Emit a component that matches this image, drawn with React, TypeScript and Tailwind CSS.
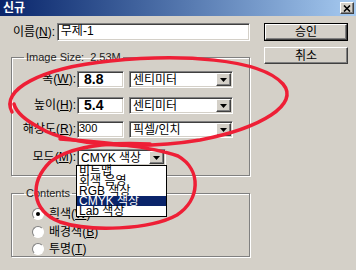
const font = "font-['Liberation_Sans','Noto_Sans_CJK_KR',sans-serif]";

// 움푹 들어간 입력칸 테두리 (윈도우 2000 스타일)
const sunken =
  "bg-white border border-t-[#808080] border-l-[#808080] border-b-white border-r-white shadow-[inset_1px_1px_0_#404040,inset_-1px_-1px_0_#d4d0c8]";
const raised =
  "bg-[#d4d0c8] border border-t-white border-l-white border-b-[#404040] border-r-[#404040] shadow-[inset_-1px_-1px_0_#808080]";

function Mn({ pre, k, post = "):" }: { pre: string; k: string; post?: string }) {
  return (
    <span>
      {pre}(<span className="underline">{k}</span>{post}
    </span>
  );
}

function Arrow() {
  return (
    <div className={`w-[15px] h-full flex items-center justify-center ${raised}`}>
      <svg width="7" height="4" viewBox="0 0 7 4">
        <path d="M0 0h7L3.5 4z" fill="#000" />
      </svg>
    </div>
  );
}

function Select({ value, w }: { value: string; w: string }) {
  return (
    <div className={`${w} h-[17px] flex ${sunken} p-[1px]`}>
      <div className="flex-1 pl-[2px] leading-[14px] text-[12px]">{value}</div>
      <Arrow />
    </div>
  );
}

function Row({ label, children, mt }: { label: React.ReactNode; children: React.ReactNode; mt: string }) {
  return (
    <div className={`flex items-center ${mt}`}>
      <div className="w-[64px] text-right text-[12px] leading-[17px]">{label}</div>
      <div className="ml-[1px] flex items-center gap-[5px]">{children}</div>
    </div>
  );
}

function Radio({ label, on, mt }: { label: React.ReactNode; on?: boolean; mt: string }) {
  return (
    <div className={`flex items-center gap-[5px] ${mt}`}>
      <div className="w-[12px] h-[12px] rounded-full bg-white border border-t-[#808080] border-l-[#808080] border-b-white border-r-white flex items-center justify-center">
        {on && <div className="w-[4px] h-[4px] rounded-full bg-black" />}
      </div>
      <span className="text-[12px] leading-[14px]">{label}</span>
    </div>
  );
}

export default function App() {
  const modes = ["비트맵", "회색 음영", "RGB 색상", "CMYK 색상", "Lab 색상"];
  return (
    <div className={`w-[356px] h-[270px] relative overflow-hidden bg-[#d4d0c8] text-black ${font}`}>
      {/* 제목 표시줄 */}
      <div className="h-[16px] flex items-center justify-between bg-gradient-to-r from-[#0a246a] to-[#a6caf0] pl-[3px] pr-[2px]">
        <span className="text-white font-bold text-[12px] leading-[14px]">신규</span>
        <div className={`w-[14px] h-[12px] flex items-center justify-center ${raised}`}>
          <svg width="8" height="7" viewBox="0 0 8 7">
            <path d="M1 0.5l6 6M7 0.5l-6 6" stroke="#000" strokeWidth="1.6" />
          </svg>
        </div>
      </div>

      <div className="flex">
        {/* 왼쪽 */}
        <div className="w-[250px] pl-[11px]">
          <div className="flex items-center mt-[7px]">
            <div className="w-[46px] pl-[2px] text-[12px]">
              <Mn pre="이름" k="N" />
            </div>
            <div className={`w-[194px] h-[18px] ${sunken} pl-[3px] text-[12px] leading-[15px]`}>무제-1</div>
          </div>

          <fieldset className="mt-[10px] h-[125px] border border-[#808080] shadow-[inset_1px_1px_0_#fff,1px_1px_0_#fff] px-0">
            <legend className="ml-[12px] px-[2px] text-[11px] leading-[12px] text-[#222]">
              Image Size:&nbsp;&nbsp;2.53M
            </legend>
            <Row label={<Mn pre="폭" k="W" />} mt="mt-[8px]">
              <div className={`w-[47px] h-[17px] ${sunken} pl-[6px] text-[14px] font-bold leading-[14px]`}>8.8</div>
              <Select value="센티미터" w="w-[104px]" />
            </Row>
            <Row label={<Mn pre="높이" k="H" />} mt="mt-[9px]">
              <div className={`w-[47px] h-[17px] ${sunken} pl-[6px] text-[14px] font-bold leading-[14px]`}>5.4</div>
              <Select value="센티미터" w="w-[104px]" />
            </Row>
            <Row label={<Mn pre="해상도" k="R" />} mt="mt-[7px]">
              <div className={`w-[47px] h-[17px] ${sunken} pl-[1px] text-[11px] leading-[12px]`}>300</div>
              <Select value="픽셀/인치" w="w-[104px]" />
            </Row>
            <Row label={<Mn pre="모드" k="M" />} mt="mt-[11px]">
              <div className="relative">
                <Select value="CMYK 색상" w="w-[89px]" />
                <div className="absolute left-[-1px] top-[16px] w-[91px] bg-white border border-black z-10">
                  {modes.map((m) => (
                    <div
                      key={m}
                      className={`h-[10px] pl-[2px] text-[12px] leading-[10px] ${
                        m === "CMYK 색상" ? "bg-[#0a246a] text-white" : ""
                      }`}
                    >
                      {m}
                    </div>
                  ))}
                </div>
              </div>
            </Row>
          </fieldset>

          <fieldset className="mt-[11px] h-[70px] border border-[#808080] shadow-[inset_1px_1px_0_#fff,1px_1px_0_#fff] pl-[20px]">
            <legend className="ml-[-8px] px-[2px] text-[11px] leading-[12px] text-[#222]">Contents</legend>
            <Radio label={<Mn pre="흰색" k="W" post=")" />} on mt="mt-[8px]" />
            <Radio label={<Mn pre="배경색" k="B" post=")" />} mt="mt-[4px]" />
            <Radio label={<Mn pre="투명" k="T" post=")" />} mt="mt-[3px]" />
          </fieldset>
        </div>

        {/* 버튼 */}
        <div className="ml-[14px] mt-[7px] flex flex-col gap-[6px]">
          <div className="w-[84px] h-[18px] border border-black">
            <div className={`h-full ${raised} flex items-center justify-center text-[12px]`}>승인</div>
          </div>
          <div className={`w-[84px] h-[17px] ${raised} flex items-center justify-center text-[12px]`}>취소</div>
        </div>
      </div>

      {/* 빨간 동그라미 표시 */}
      <svg className="absolute inset-0 pointer-events-none" width="356" height="270" viewBox="0 0 356 270">
        <g fill="none" stroke="#ee1f36" strokeWidth="3.5" strokeLinecap="round">
          <path d="M12 112 C0 90 40 68 110 61 C180 54 260 58 283 84 C300 104 262 128 200 140 C140 150 70 146 40 128 C25 120 16 112 14 104" />
          <path d="M60 139 C100 142 150 146 178 156 C202 170 200 200 177 215 C150 230 90 232 60 222 C30 210 30 182 50 162 C70 146 110 142 150 144" />
        </g>
      </svg>
    </div>
  );
}
